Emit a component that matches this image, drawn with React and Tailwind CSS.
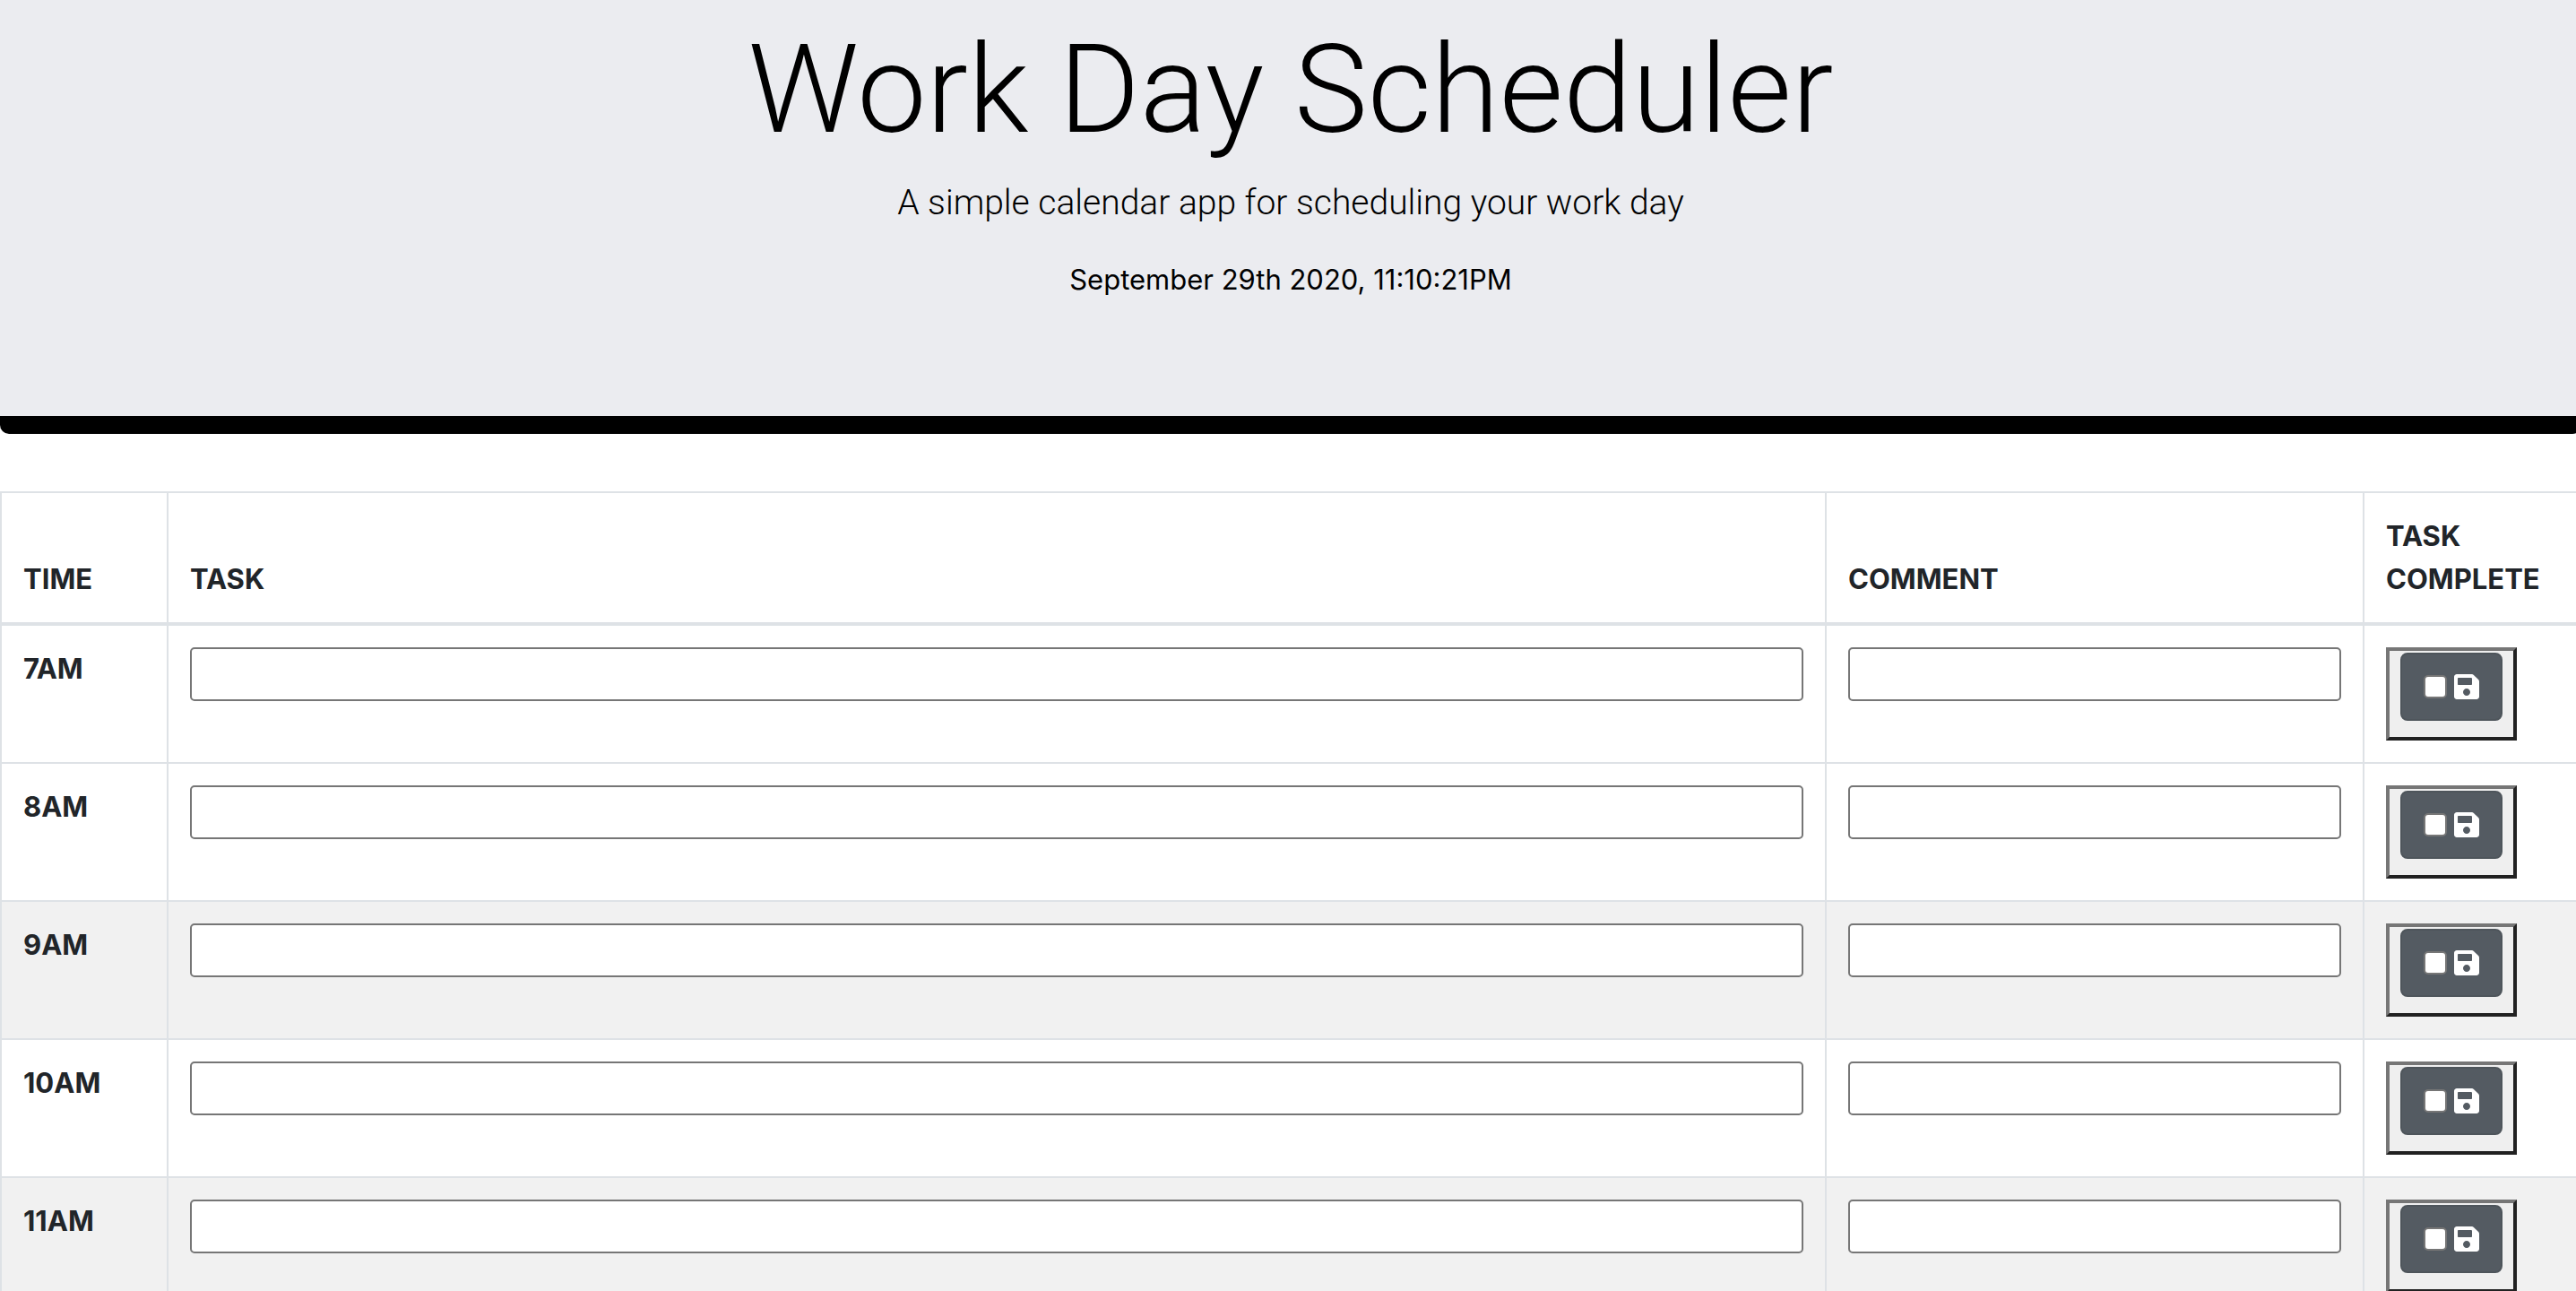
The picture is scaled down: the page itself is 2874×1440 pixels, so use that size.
const slots = [
  { time: "7AM", shaded: false },
  { time: "8AM", shaded: false },
  { time: "9AM", shaded: true },
  { time: "10AM", shaded: false },
  { time: "11AM", shaded: true },
];

function SaveIcon() {
  return (
    <svg viewBox="0 0 448 512" className="h-8 w-7" fill="currentColor" aria-hidden="true">
      <path d="M433.941 129.941l-83.882-83.882A48 48 0 0 0 316.118 32H48C21.49 32 0 53.49 0 80v352c0 26.51 21.49 48 48 48h352c26.51 0 48-21.49 48-48V163.882a48 48 0 0 0-14.059-33.941zM224 416c-35.346 0-64-28.654-64-64 0-35.346 28.654-64 64-64s64 28.654 64 64c0 35.346-28.654 64-64 64zm96-304.52V212c0 6.627-5.373 12-12 12H76c-6.627 0-12-5.373-12-12V108c0-6.627 5.373-12 12-12h228.52c3.183 0 6.235 1.264 8.485 3.515l3.48 3.48A11.996 11.996 0 0 1 320 111.48z" />
    </svg>
  );
}

function TextBox({ label }) {
  return (
    <input
      type="text"
      aria-label={label}
      className="block h-[60px] w-full rounded-[5px] border-2 border-[#767676] bg-white px-1"
    />
  );
}

function SlotRow({ time, shaded, first }) {
  const edge = first ? "border-t-4" : "border-t-2";
  const cell = `${edge} border-l-2 border-[#dee2e6] p-6 text-left align-top`;
  return (
    <tr className={shaded ? "bg-[#f1f1f1]" : "bg-white"}>
      <th scope="row" className={cell}>{time}</th>
      <td className={cell}>
        <TextBox label={`Task at ${time}`} />
      </td>
      <td className={cell}>
        <TextBox label={`Comment at ${time}`} />
      </td>
      <td className={cell}>
        <div className="h-[104px] w-[146px] border-4 border-t-[#767676] border-r-[#212121] border-b-[#212121] border-l-[#767676] bg-[#efefef] px-3 pt-0.5">
          <div className="flex h-[76px] items-center justify-center gap-2 rounded-lg border-2 border-[#4e555b] bg-[#545b62] text-white">
            <input
              type="checkbox"
              aria-label={`${time} complete`}
              className="size-[26px] appearance-none rounded-[5px] border-2 border-[#767676] bg-white checked:bg-blue-600"
            />
            <button type="button" aria-label={`Save ${time}`}>
              <SaveIcon />
            </button>
          </div>
        </div>
      </td>
    </tr>
  );
}

export default function App() {
  const head = "border-t-2 border-l-2 border-[#dee2e6] p-6 text-left align-bottom";
  return (
    <div className="h-screen overflow-hidden bg-white font-['Inter',sans-serif] text-[31px] leading-[48px] text-[#212529]">
      <div className="w-[calc(100%+6px)]">
        <header className="mb-16 rounded-b-[10px] border-b-[20px] border-black bg-[#ebecf0] pt-3.5 pb-32 text-center text-black">
          <h1 className="font-['Roboto',sans-serif] text-[138px] leading-[172px] font-light">
            Work Day Scheduler
          </h1>
          <p className="mt-2.5 font-['Roboto',sans-serif] text-[39px] leading-[60px] font-light">
            A simple calendar app for scheduling your work day
          </p>
          <p className="mt-8">September 29th 2020, 11:10:21PM</p>
        </header>
        <table className="w-full table-fixed border-separate border-spacing-0">
          <colgroup>
            <col className="w-[186px]" />
            <col />
            <col className="w-[600px]" />
            <col className="w-[244px]" />
          </colgroup>
          <thead>
            <tr>
              <th scope="col" className={head}>TIME</th>
              <th scope="col" className={head}>TASK</th>
              <th scope="col" className={head}>COMMENT</th>
              <th scope="col" className={head}>TASK COMPLETE</th>
            </tr>
          </thead>
          <tbody>
            {slots.map((slot, i) => (
              <SlotRow key={slot.time} {...slot} first={i === 0} />
            ))}
          </tbody>
        </table>
      </div>
    </div>
  );
}
